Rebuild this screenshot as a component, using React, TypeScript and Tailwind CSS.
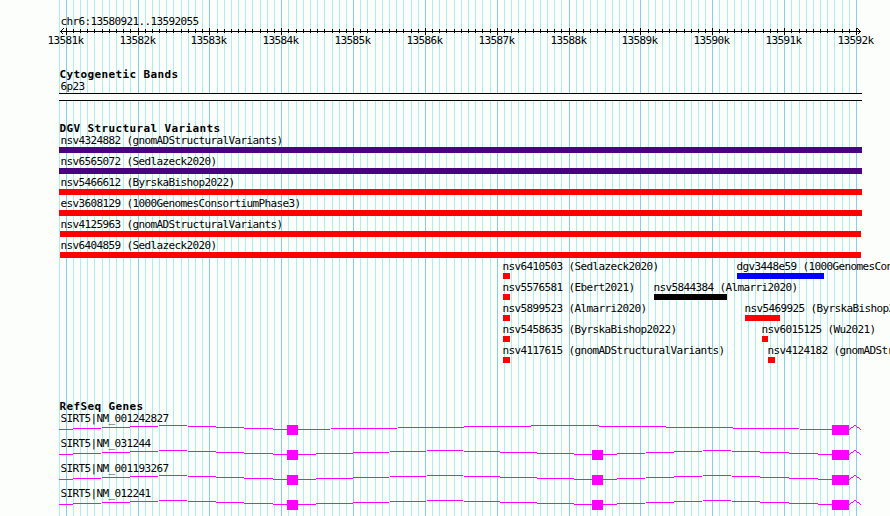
import React from 'react';

interface Variant {
  name: string;
  x: number;
  width: number;
  color: string;
}

interface Gene {
  name: string;
  exons: { x: number; width: number }[];
}

const START = 13580921;
const PX_PER_BASE = 800 / 11135;

const toX = (pos: number) => Math.round(60 + (pos - START) * PX_PER_BASE);

// one entry for every 100 bases, every tenth is a labelled one
const ticks = Array.from({ length: 112 }, (_, i) => {
  const pos = 13580900 + i * 100;
  return { pos, x: Math.max(59, toX(pos)), major: pos % 1000 === 0 };
}).filter((t, i) => i === 0 || t.x > 60);

const variantRows: Variant[][] = [
  [{ name: 'nsv4324882 (gnomADStructuralVariants)', x: 59, width: 803, color: 'bg-[#4b0082]' }],
  [{ name: 'nsv6565072 (Sedlazeck2020)', x: 59, width: 803, color: 'bg-[#4b0082]' }],
  [{ name: 'nsv5466612 (ByrskaBishop2022)', x: 59, width: 803, color: 'bg-[#ff0000]' }],
  [{ name: 'esv3608129 (1000GenomesConsortiumPhase3)', x: 59, width: 803, color: 'bg-[#ff0000]' }],
  [{ name: 'nsv4125963 (gnomADStructuralVariants)', x: 60, width: 801, color: 'bg-[#ff0000]' }],
  [{ name: 'nsv6404859 (Sedlazeck2020)', x: 60, width: 801, color: 'bg-[#ff0000]' }],
  [
    { name: 'nsv6410503 (Sedlazeck2020)', x: 503, width: 7, color: 'bg-[#ff0000]' },
    { name: 'dgv3448e59 (1000GenomesCon', x: 737, width: 87, color: 'bg-[#0000ff]' },
  ],
  [
    { name: 'nsv5576581 (Ebert2021)', x: 503, width: 7, color: 'bg-[#ff0000]' },
    { name: 'nsv5844384 (Almarri2020)', x: 654, width: 73, color: 'bg-black' },
  ],
  [
    { name: 'nsv5899523 (Almarri2020)', x: 503, width: 7, color: 'bg-[#ff0000]' },
    { name: 'nsv5469925 (ByrskaBishop2', x: 745, width: 35, color: 'bg-[#ff0000]' },
  ],
  [
    { name: 'nsv5458635 (ByrskaBishop2022)', x: 503, width: 7, color: 'bg-[#ff0000]' },
    { name: 'nsv6015125 (Wu2021)', x: 762, width: 6, color: 'bg-[#ff0000]' },
  ],
  [
    { name: 'nsv4117615 (gnomADStructuralVariants)', x: 503, width: 7, color: 'bg-[#ff0000]' },
    { name: 'nsv4124182 (gnomADStr', x: 768, width: 7, color: 'bg-[#ff0000]' },
  ],
];

const first = { x: 287, width: 11 };
const middle = { x: 592, width: 11 };
const last = { x: 832, width: 17 };

const genes: Gene[] = [
  { name: 'SIRT5|NM_001242827', exons: [first, last] },
  { name: 'SIRT5|NM_031244', exons: [first, middle, last] },
  { name: 'SIRT5|NM_001193267', exons: [first, middle, last] },
  { name: 'SIRT5|NM_012241', exons: [first, middle, last] },
];

const GridLines = () => (
  <svg className="absolute inset-0" width="890" height="516" shapeRendering="crispEdges">
    {ticks.map(t => (
      <rect key={t.pos} x={t.x} y="0" width="1" height="516" fill={t.major ? '#87ceeb' : '#afeeee'} />
    ))}
  </svg>
);

const Ruler = () => (
  <div className="relative h-[22px]">
    <svg className="block" width="890" height="8" shapeRendering="crispEdges">
      <rect x="60" y="3" width="801" height="1" />
      {ticks.filter(t => t.x > 60).map(t => (
        <rect key={t.pos} x={t.x} y={t.major ? 0 : 1} width="1" height={t.major ? 7 : 4} />
      ))}
      <path d="M63.5 0.5 L60.5 3.5 L63.5 6.5 M857.5 0.5 L860.5 3.5 L857.5 6.5" fill="none" stroke="#000" />
    </svg>
    {ticks.filter(t => t.major).map(t => (
      <span key={t.pos} className="absolute top-[6px]" style={{ left: t.x - 18.5 }}>
        {t.pos / 1000}k
      </span>
    ))}
  </div>
);

const TrackTitle = ({ children }: { children: React.ReactNode }) => (
  <h2 className="pl-[59.4px] h-3 font-bold tracking-[0.378px]">{children}</h2>
);

const VariantRow = ({ row }: { row: Variant[] }) => (
  <div className="relative h-[21px]">
    {row.map(v => (
      <div key={v.name} className="absolute top-0" style={{ left: v.x }}>
        <div className="h-[13px]" style={{ marginLeft: v.x > 60 ? -0.5 : 60.5 - v.x }}>{v.name}</div>
        <div className={`h-[6px] ${v.color}`} style={{ width: v.width }} />
      </div>
    ))}
  </div>
);

const GeneRow = ({ gene }: { gene: Gene }) => {
  // introns are drawn as hats between neighbouring exons
  const hats: number[][] = [];
  let from = 59;
  gene.exons.forEach(e => {
    hats.push([from, e.x]);
    from = e.x + e.width;
  });
  hats.push([from, 861]);

  return (
    <div className="h-[25px]">
      <div className="h-[13px] pl-[60.5px]">{gene.name}</div>
      <svg className="block" width="890" height="10" shapeRendering="crispEdges">
        {hats.map(([a, b]) => (
          <path
            key={a}
            d={`M${a} 4.5 L${Math.floor((a + b) / 2)} 0.5 L${b} 4.5`}
            fill="none"
            stroke="#ff00ff"
          />
        ))}
        {gene.exons.map(e => (
          <rect key={e.x} x={e.x} y="0" width={e.width} height="10" fill="#ff00ff" />
        ))}
      </svg>
    </div>
  );
};

export default function App() {
  return (
    <div className="relative w-[890px] h-[516px] overflow-hidden bg-[#fcfefc] text-black whitespace-nowrap font-['DejaVu_Sans_Mono',monospace] text-[11px] leading-[13px] tracking-[-0.622px]">
      <GridLines />
      <div className="relative pt-[15px]">
        <div className="h-[13px] pl-[60.5px]">chr6:13580921..13592055</div>
        <Ruler />

        <section className="pt-[18px]">
          <TrackTitle>Cytogenetic Bands</TrackTitle>
          <div className="h-[13px] pl-[60.5px]">6p23</div>
          <div className="ml-[59px] w-[803px] h-2 border-y border-black bg-[#fcfefc]" />
        </section>

        <section className="pt-[21px]">
          <TrackTitle>DGV Structural Variants</TrackTitle>
          {variantRows.map(row => (
            <VariantRow key={row[0].name} row={row} />
          ))}
        </section>

        <section className="pt-[35px]">
          <TrackTitle>RefSeq Genes</TrackTitle>
          {genes.map(gene => (
            <GeneRow key={gene.name} gene={gene} />
          ))}
        </section>
      </div>
    </div>
  );
}
